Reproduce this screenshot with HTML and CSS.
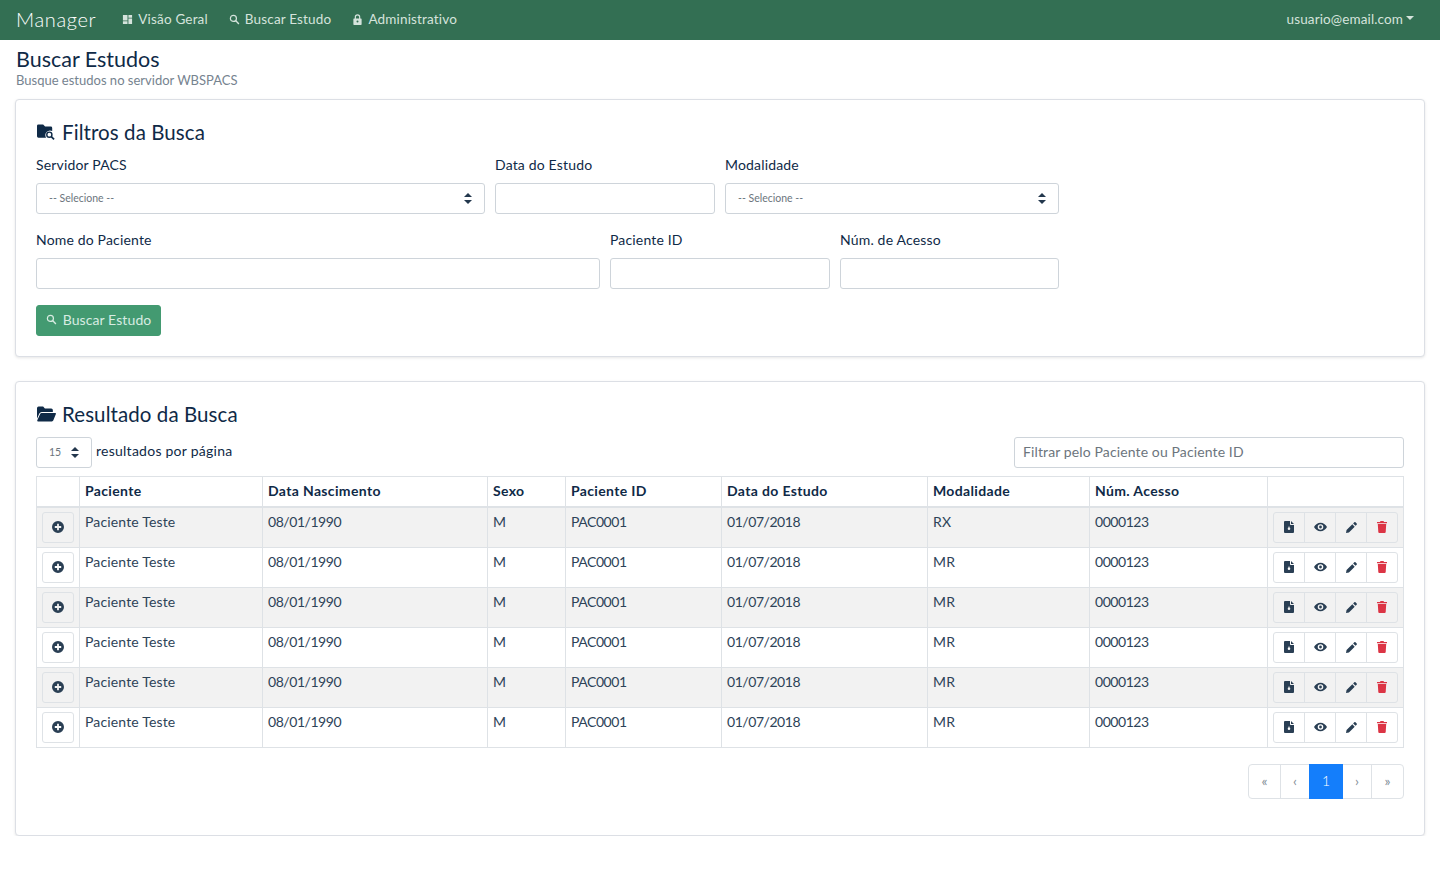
FILE: index.html
```html
<!DOCTYPE html>
<html lang="pt-BR">
<head>
<meta charset="utf-8">
<title>Manager - Buscar Estudos</title>
<link rel="stylesheet" href="styles.css">
</head>
<body>
<svg class="defs" aria-hidden="true">
  <symbol id="i-dash" viewBox="0 0 12 12"><path d="M1 1h5v6H1zM7 1h4v3H7zM7 5h4v6H7zM1 8h5v3H1z"/></symbol>
  <symbol id="i-search" viewBox="0 0 12 12"><circle cx="4.8" cy="4.8" r="3.3" fill="none" stroke="currentColor" stroke-width="1.3"/><path d="M7.2 7.2l3.6 3.6" fill="none" stroke="currentColor" stroke-width="1.5"/></symbol>
  <symbol id="i-lock" viewBox="0 0 12 12"><path fill-rule="evenodd" d="M3 5V3.400a3 3 0 0 1 6 0V5h.8a.7.7 0 0 1 .7.7v5.600a.7.7 0 0 1-.7.7H2.200a.7.7 0 0 1-.7-.7V5.700a.7.7 0 0 1 .7-.7zm1.300 0h3.400V3.400a1.700 1.700 0 0 0-3.400 0zM6 7.200a1.100 1.100 0 1 0 0 2.200 1.100 1.100 0 0 0 0-2.200z"/></symbol>
  <symbol id="i-folder-search" viewBox="0 0 20 16"><path d="M0 1.500A1.500 1.500 0 0 1 1.500 0h5l2 2.200h6A1.500 1.500 0 0 1 16 3.700V7a5 5 0 0 0-6.500 7H1.500A1.500 1.500 0 0 1 0 12.500z"/><circle cx="13" cy="10.800" r="2.700" fill="none" stroke="currentColor" stroke-width="1.500"/><path d="M15 12.800l3 3" fill="none" stroke="currentColor" stroke-width="1.800"/></symbol>
  <symbol id="i-folder-open" viewBox="0 0 18 14"><path d="M0 1.500A1.500 1.500 0 0 1 1.500 0h4.300l1.700 1.800h6A1.500 1.500 0 0 1 15 3.300V5H4.500a2.500 2.500 0 0 0-2.300 1.500L0 11.500z"/><path d="M4.300 6h12.900a.8.800 0 0 1 .7 1.100l-2.400 5.900a1.500 1.500 0 0 1-1.400 1H1a.8.800 0 0 1-.7-1.100l2.700-6a1.500 1.500 0 0 1 1.300-.9z"/></symbol>
  <symbol id="i-plus" viewBox="0 0 12 12"><path fill-rule="evenodd" d="M6 0a6 6 0 1 1 0 12A6 6 0 0 1 6 0zM5.100 2.800v2.300H2.800v1.800h2.300v2.300h1.800V6.900h2.300V5.100H6.900V2.800z"/></symbol>
  <symbol id="i-file" viewBox="0 0 10 12"><path fill-rule="evenodd" d="M1 0h5v3.200A.8.800 0 0 0 6.800 4H10v7a1 1 0 0 1-1 1H1a1 1 0 0 1-1-1V1a1 1 0 0 1 1-1zm6 0l3 3H7zM5 6.500a1.300 1.300 0 1 0 0 2.600 1.300 1.300 0 0 0 0-2.600zM5 5l-.7 1.500h1.400z"/></symbol>
  <symbol id="i-eye" viewBox="0 0 14 10"><path fill-rule="evenodd" d="M7 .5c3 0 5.500 1.800 7 4.500-1.500 2.700-4 4.500-7 4.500S1.500 7.700 0 5C1.500 2.300 4 .5 7 .5zM7 2a3 3 0 1 0 0 6 3 3 0 0 0 0-6zm0 1.500a1.500 1.500 0 1 1 0 3 1.500 1.500 0 0 1 0-3z"/></symbol>
  <symbol id="i-pencil" viewBox="0 0 12 12"><path d="M0 12l.6-3.200 6.300-6.300 2.600 2.600-6.300 6.300zM7.800 1.600L9 .4a1 1 0 0 1 1.400 0l1.200 1.200a1 1 0 0 1 0 1.400l-1.200 1.200z"/></symbol>
  <symbol id="i-trash" viewBox="0 0 10 12"><path d="M3.500 0h3l.5 1h3v1.200H0V1h3zM.8 3h8.400l-.5 8.100a1 1 0 0 1-1 .9H2.300a1 1 0 0 1-1-.9z"/></symbol>
</svg>

<header class="navbar">
  <a class="brand">Manager</a>
  <nav class="nav">
    <a class="nav-link"><svg class="nav-icon"><use href="#i-dash"/></svg>Visão Geral</a>
    <a class="nav-link"><svg class="nav-icon"><use href="#i-search"/></svg>Buscar Estudo</a>
    <a class="nav-link"><svg class="nav-icon"><use href="#i-lock"/></svg>Administrativo</a>
  </nav>
  <a class="user">usuario@email.com<span class="caret"></span></a>
</header>

<main class="page">
  <h1 class="page-title">Buscar Estudos</h1>
  <p class="page-sub">Busque estudos no servidor WBSPACS</p>

  <section class="card card-filters">
    <h2 class="card-title"><svg class="title-icon"><use href="#i-folder-search"/></svg>Filtros da Busca</h2>
    <form class="filters">
      <div class="row row-a">
        <div class="field"><label>Servidor PACS</label><div class="control select">-- Selecione --<span class="updown"></span></div></div>
        <div class="field"><label>Data do Estudo</label><div class="control"></div></div>
        <div class="field"><label>Modalidade</label><div class="control select">-- Selecione --<span class="updown"></span></div></div>
      </div>
      <div class="row row-b">
        <div class="field"><label>Nome do Paciente</label><div class="control"></div></div>
        <div class="field"><label>Paciente ID</label><div class="control"></div></div>
        <div class="field"><label>Núm. de Acesso</label><div class="control"></div></div>
      </div>
      <button class="btn-search" type="button"><svg class="btn-icon"><use href="#i-search"/></svg>Buscar Estudo</button>
    </form>
  </section>

  <section class="card card-results">
    <h2 class="card-title"><svg class="title-icon"><use href="#i-folder-open"/></svg>Resultado da Busca</h2>
    <div class="tools">
      <div class="length"><div class="control select per-page">15<span class="updown"></span></div><span class="length-text">resultados por página</span></div>
      <div class="filter-box">Filtrar pelo Paciente ou Paciente ID</div>
    </div>
    <table class="grid">
      <colgroup><col class="c0"><col class="c1"><col class="c2"><col class="c3"><col class="c4"><col class="c5"><col class="c6"><col class="c7"><col class="c8"></colgroup>
      <thead><tr><th></th><th>Paciente</th><th>Data Nascimento</th><th>Sexo</th><th>Paciente ID</th><th>Data do Estudo</th><th>Modalidade</th><th>Núm. Acesso</th><th></th></tr></thead>
      <tbody>
        <tr><td class="cell-btn"><button class="icon-btn" type="button"><svg class="ic"><use href="#i-plus"/></svg></button></td><td>Paciente Teste</td><td>08/01/1990</td><td>M</td><td>PAC0001</td><td>01/07/2018</td><td>RX</td><td>0000123</td><td class="cell-btn"><div class="group"><button type="button"><svg class="ic-f"><use href="#i-file"/></svg></button><button type="button"><svg class="ic-e"><use href="#i-eye"/></svg></button><button type="button"><svg class="ic-p"><use href="#i-pencil"/></svg></button><button type="button" class="danger"><svg class="ic-f"><use href="#i-trash"/></svg></button></div></td></tr>
        <tr><td class="cell-btn"><button class="icon-btn" type="button"><svg class="ic"><use href="#i-plus"/></svg></button></td><td>Paciente Teste</td><td>08/01/1990</td><td>M</td><td>PAC0001</td><td>01/07/2018</td><td>MR</td><td>0000123</td><td class="cell-btn"><div class="group"><button type="button"><svg class="ic-f"><use href="#i-file"/></svg></button><button type="button"><svg class="ic-e"><use href="#i-eye"/></svg></button><button type="button"><svg class="ic-p"><use href="#i-pencil"/></svg></button><button type="button" class="danger"><svg class="ic-f"><use href="#i-trash"/></svg></button></div></td></tr>
        <tr><td class="cell-btn"><button class="icon-btn" type="button"><svg class="ic"><use href="#i-plus"/></svg></button></td><td>Paciente Teste</td><td>08/01/1990</td><td>M</td><td>PAC0001</td><td>01/07/2018</td><td>MR</td><td>0000123</td><td class="cell-btn"><div class="group"><button type="button"><svg class="ic-f"><use href="#i-file"/></svg></button><button type="button"><svg class="ic-e"><use href="#i-eye"/></svg></button><button type="button"><svg class="ic-p"><use href="#i-pencil"/></svg></button><button type="button" class="danger"><svg class="ic-f"><use href="#i-trash"/></svg></button></div></td></tr>
        <tr><td class="cell-btn"><button class="icon-btn" type="button"><svg class="ic"><use href="#i-plus"/></svg></button></td><td>Paciente Teste</td><td>08/01/1990</td><td>M</td><td>PAC0001</td><td>01/07/2018</td><td>MR</td><td>0000123</td><td class="cell-btn"><div class="group"><button type="button"><svg class="ic-f"><use href="#i-file"/></svg></button><button type="button"><svg class="ic-e"><use href="#i-eye"/></svg></button><button type="button"><svg class="ic-p"><use href="#i-pencil"/></svg></button><button type="button" class="danger"><svg class="ic-f"><use href="#i-trash"/></svg></button></div></td></tr>
        <tr><td class="cell-btn"><button class="icon-btn" type="button"><svg class="ic"><use href="#i-plus"/></svg></button></td><td>Paciente Teste</td><td>08/01/1990</td><td>M</td><td>PAC0001</td><td>01/07/2018</td><td>MR</td><td>0000123</td><td class="cell-btn"><div class="group"><button type="button"><svg class="ic-f"><use href="#i-file"/></svg></button><button type="button"><svg class="ic-e"><use href="#i-eye"/></svg></button><button type="button"><svg class="ic-p"><use href="#i-pencil"/></svg></button><button type="button" class="danger"><svg class="ic-f"><use href="#i-trash"/></svg></button></div></td></tr>
        <tr><td class="cell-btn"><button class="icon-btn" type="button"><svg class="ic"><use href="#i-plus"/></svg></button></td><td>Paciente Teste</td><td>08/01/1990</td><td>M</td><td>PAC0001</td><td>01/07/2018</td><td>MR</td><td>0000123</td><td class="cell-btn"><div class="group"><button type="button"><svg class="ic-f"><use href="#i-file"/></svg></button><button type="button"><svg class="ic-e"><use href="#i-eye"/></svg></button><button type="button"><svg class="ic-p"><use href="#i-pencil"/></svg></button><button type="button" class="danger"><svg class="ic-f"><use href="#i-trash"/></svg></button></div></td></tr>
      </tbody>
    </table>
    <div class="pager-wrap">
      <div class="pager"><a class="pg pg-first">«</a><a class="pg pg-prev">‹</a><a class="pg pg-cur">1</a><a class="pg pg-next">›</a><a class="pg pg-last">»</a></div>
    </div>
  </section>
</main>
</body>
</html>
```

FILE: styles.css
```css
* { box-sizing: border-box; }
html, body { margin: 0; padding: 0; }
body {
  font-family: "Lato", "Open Sans", sans-serif;
  font-size: 14px;
  line-height: 20px;
  color: #0f2a47;
  background: #fff;
}
.defs { display: none; }

.navbar {
  height: 40px;
  background: #336f53;
  display: flex;
  align-items: center;
  padding: 0 26px 2px 16px;
  color: #d5e3dc;
}
.brand { font-size: 20px; font-weight: 300; color: #fff; letter-spacing: .65px; margin-right: 26px; }
.nav { display: flex; gap: 21px; flex: 1; }
.nav-link { display: flex; align-items: center; font-size: 13.500px; letter-spacing: .17px; }
.nav-icon { width: 11px; height: 11px; margin-right: 5px; fill: currentColor; color: #d5e3dc; }
.user { font-size: 13.500px; letter-spacing: .12px; display: flex; align-items: center; }
.caret {
  margin-left: 3px; margin-top: -3px;
  border: 4px solid transparent; border-top-color: #d5e3dc; border-bottom: 0;
}

.page { padding: 0 15px; }
.page-title { margin: 0; padding: 7px 1px 0; font-size: 21.500px; line-height: 24px; font-weight: 400; }
.page-sub { margin: 0; padding: 0 1px; font-size: 13px; line-height: 18px; color: #76838f; }

.card {
  background: #fff;
  border: 1px solid #dcdfe5;
  border-radius: 4px;
  box-shadow: 0 1px 3px rgba(0, 0, 0, .1);
  padding: 20px;
}
.card-filters { height: 258px; margin-top: 10px; }
.card-results { height: 455px; margin-top: 24px; }
.card-title {
  margin: 0;
  display: flex;
  align-items: center;
  font-size: 20.500px;
  line-height: 24px;
  font-weight: 400;
  letter-spacing: .08px;
}
.title-icon { width: 19px; height: 16px; margin: 0 6px 0 1px; fill: currentColor; color: #0f2a47; }

.filters { width: 1023px; }
.row { display: grid; gap: 10px; margin-top: 11px; }
.row + .row { margin-top: 16px; }
.row-a { grid-template-columns: 449px 220px 334px; }
.row-b { grid-template-columns: 564px 220px 219px; }
.field label { display: block; font-size: 14px; line-height: 20px; margin-bottom: 8px; letter-spacing: .17px; }
.control {
  height: 31px;
  border: 1px solid #ced4da;
  border-radius: 3px;
  background: #fff;
}
.select {
  display: flex; align-items: center; justify-content: space-between;
  padding: 0 12px 1px;
  font-size: 10.500px;
  color: #6c757d;
}
.updown { width: 8px; height: 11px; display: flex; flex-direction: column; justify-content: space-between; }
.updown::before { content: ""; border: 4px solid transparent; border-bottom: 4.500px solid #23374d; border-top: 0; }
.updown::after { content: ""; border: 4px solid transparent; border-top: 4.500px solid #23374d; border-bottom: 0; }
.btn-search {
  margin-top: 16px;
  width: 125px; height: 31px;
  padding: 0 0 2px;
  display: flex; align-items: center; justify-content: center;
  background: #439a71;
  border: 1px solid #439a71;
  border-radius: 3px;
  color: #d8ece2;
  font: 14px "Lato", sans-serif;
  letter-spacing: .1px;
}
.btn-icon { width: 11px; height: 11px; margin-right: 6px; fill: currentColor; }

.tools { display: flex; justify-content: space-between; align-items: center; margin-top: 11px; }
.length { display: flex; align-items: center; }
.per-page { width: 56px; height: 31px; }
.length-text { margin-left: 4px; font-size: 14px; margin-top: -4px; letter-spacing: .25px; }
.filter-box {
  width: 390px; height: 31px;
  border: 1px solid #ced4da; border-radius: 3px;
  padding: 0 8px; line-height: 27px;
  font-size: 14px; color: #6c757d; letter-spacing: .12px;
}

.grid {
  width: 1367px;
  margin-top: 8px;
  table-layout: fixed;
  border-collapse: collapse;
  font-size: 14px;
}
.c0 { width: 43px; } .c1 { width: 183px; } .c2 { width: 225px; } .c3 { width: 78px; }
.c4 { width: 156px; } .c5 { width: 206px; } .c6 { width: 162px; } .c7 { width: 178px; } .c8 { width: 136px; }
.grid th, .grid td {
  border: 1px solid #dee2e6;
  padding: 4px 5px;
  vertical-align: top;
  text-align: left;
}
.grid th { height: 30px; padding-bottom: 3px; font-weight: 700; border-bottom: 2px solid #dee2e6; color: #0f2a47; letter-spacing: .35px; }
.grid td { height: 40px; color: #2d4358; letter-spacing: .15px; }
.grid td:nth-child(3), .grid td:nth-child(5), .grid td:nth-child(6), .grid td:nth-child(8) { letter-spacing: -.45px; }
.grid tbody tr:nth-child(odd) td { background: #f2f2f2; }
.icon-btn {
  width: 32px; height: 31px;
  background: transparent;
  border: 1px solid #dee2e6;
  border-radius: 3px;
  display: flex; align-items: center; justify-content: center;
  padding: 0;
}
.ic { width: 12px; height: 12px; fill: #2a3f54; }
.group { display: flex; width: 125px; height: 31px; border: 1px solid #dee2e6; border-radius: 3px; }
.group button {
  flex: 1; background: transparent; border: 0; border-left: 1px solid #dee2e6;
  display: flex; align-items: center; justify-content: center; padding: 0;
  color: #2a3f54;
}
.group button:first-child { border-left: 0; }
.group svg { fill: currentColor; }
.group .danger { color: #dc3545; }
.ic-f { width: 10px; height: 12px; }
.ic-e { width: 13px; height: 10px; }
.ic-p { width: 11px; height: 11px; }

.pager-wrap { display: flex; justify-content: flex-end; margin-top: 16px; }
.pager { display: flex; height: 35px; border: 1px solid #dee2e6; border-radius: 4px; font-size: 14px; color: #848e98; }
.pg { display: flex; align-items: center; justify-content: center; border-left: 1px solid #dee2e6; }
.pg-first { width: 31px; border-left: 0; }
.pg-prev { width: 29px; }
.pg-cur { width: 34px; margin: -1px 0; background: #147efb; color: #fff; border: 0; font-weight: 300; }
.pg-next { width: 28px; border-left: 0; }
.pg-last { width: 32px; }
```
